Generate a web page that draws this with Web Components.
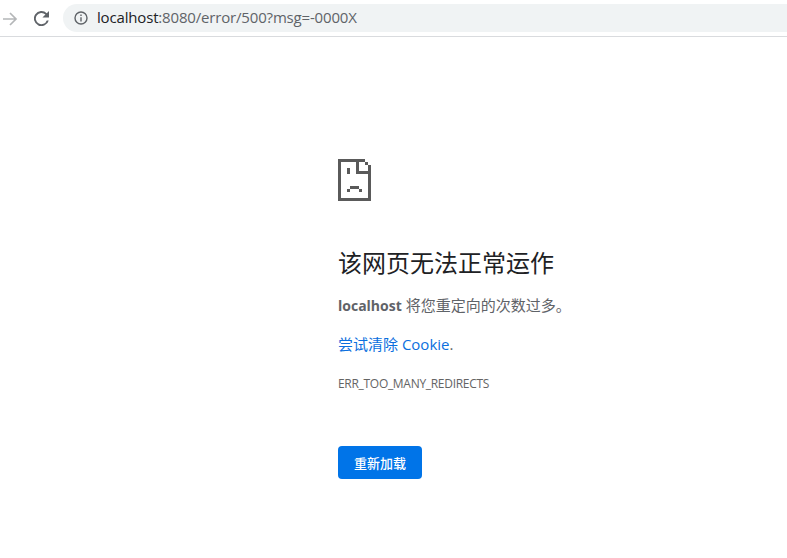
<!DOCTYPE html>
<html><head><meta charset="utf-8"><style>
html,body{margin:0;padding:0;background:#fff;height:100%;overflow:hidden}
body{font-family:"Open Sans","Noto Sans CJK SC",sans-serif;display:flex;flex-direction:column}
b{font-size:14px}
</style></head><body>
<browser-bar url-host="localhost" url-rest=":8080/error/500?msg=-0000X"></browser-bar>
<error-page>
<sad-icon></sad-icon>
<h-title slot="title">该网页无法正常运作</h-title>
<span slot="summary"><b>localhost</b> 将您重定向的次数过多。</span>
<span slot="link">尝试清除 Cookie</span>
<span slot="code">ERR_TOO_MANY_REDIRECTS</span>
<reload-button slot="action">重新加载</reload-button>
</error-page>
<script>
function def(name,html,init){customElements.define(name,class extends HTMLElement{constructor(){super();this.attachShadow({mode:'open'}).innerHTML=html;}connectedCallback(){if(init)init(this)}})}
const F='"Open Sans","Noto Sans CJK SC",sans-serif';
def('browser-bar',`<style>
:host{display:flex;align-items:center;height:36px;border-bottom:1px solid #d9dbde;box-sizing:content-box;flex:none;font:15px ${F};padding-left:2px}
svg{display:block;flex:none}
.fwd{margin-top:1px}.rel{margin-left:16px}
.omni{margin-left:14px;flex:1;height:28px;background:#f0f3f4;border-radius:14px 0 0 14px;display:flex;align-items:center;padding-left:11px}
.url{margin-left:9px;margin-bottom:2px;color:#5f6368;white-space:nowrap;letter-spacing:-.17px}
.host{color:#202124}
</style>
<svg class="fwd" width="16" height="16" viewBox="0 0 16 16"><path d="M1 8H14M8 2L14 8L8 14" fill="none" stroke="#b4b6b8" stroke-width="1.7"/></svg>
<svg class="rel" width="15" height="15" viewBox="0 0 16 16"><path d="M13.6 2.4A8 8 0 1 0 15.7 10H13.6A6 6 0 1 1 12.2 3.8L9 7H16V0Z" fill="#5f6368"/></svg>
<div class="omni"><svg width="14" height="14" viewBox="0 0 14 14"><circle cx="7" cy="7" r="6" fill="none" stroke="#5f6368" stroke-width="1.4"/><path d="M6.3 6.2H7.7V10.4H6.3ZM6.3 3.6H7.7V5H6.3Z" fill="#5f6368"/></svg><span class="url"><span class="host" id="h"></span><span id="r"></span></span></div>`,
el=>{el.shadowRoot.getElementById('h').textContent=el.getAttribute('url-host');el.shadowRoot.getElementById('r').textContent=el.getAttribute('url-rest');});
def('error-page',`<style>
:host{display:block;flex:1;padding:122px 0 0 338px;box-sizing:border-box;color:#5f6368;font:15px/20px ${F}}
.title{margin-top:44px;color:#202124;font-size:24px;line-height:36px}
.sum{margin-top:14px;white-space:nowrap}
.link{margin-top:18px;color:#0b6fde;white-space:nowrap}
.code{margin-top:20px;font-size:12px;color:#646464;white-space:nowrap;letter-spacing:-.3px}
.act{margin-top:52px}
.dot{color:#5f6368}
</style><slot></slot>
<div class="title"><slot name="title"></slot></div>
<div class="sum"><slot name="summary"></slot></div>
<div class="link"><slot name="link"></slot><span class="dot">.</span></div>
<div class="code"><slot name="code"></slot></div>
<div class="act"><slot name="action"></slot></div>`);
def('h-title',`<style>:host{display:block}</style><slot></slot>`);
def('sad-icon',`<style>:host{display:block;width:33px;height:42px}svg{display:block}</style>
<svg width="33" height="42" viewBox="0 0 11 14" shape-rendering="crispEdges" fill="#5a5a5a">
<rect x="0" y="0" width="9" height="1"/><rect x="9" y="1" width="1" height="1"/><rect x="10" y="2" width="1" height="12"/><rect x="0" y="13" width="11" height="1"/><rect x="0" y="0" width="1" height="14"/>
<rect x="6" y="1" width="1" height="3"/><rect x="6" y="4" width="4" height="1"/>
<rect x="3" y="3" width="1" height="2"/><rect x="4" y="9" width="3" height="1"/><rect x="3" y="10" width="1" height="1"/><rect x="7" y="10" width="1" height="1"/></svg>`);
def('reload-button',`<style>:host{display:inline-flex;align-items:center;justify-content:center;width:84px;height:33px;background:#0074e8;border-radius:4px;color:#fff;font:500 13px ${F}}</style><slot></slot>`);
</script>
</body></html>
